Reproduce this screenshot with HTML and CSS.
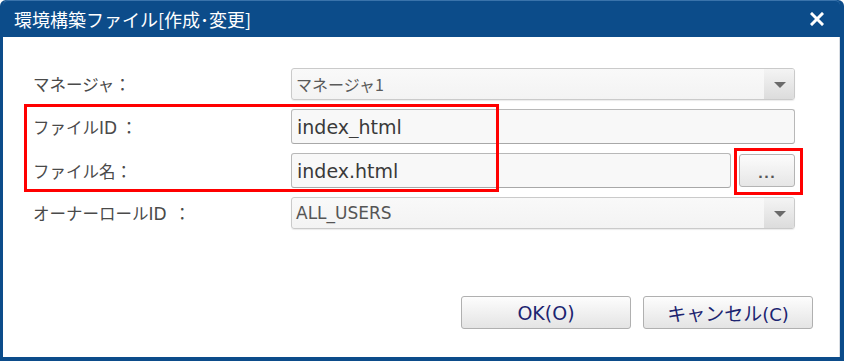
FILE: index.html
```html
<!DOCTYPE html>
<html lang="ja">
<head>
    <meta charset="UTF-8">
    <title>環境構築ファイル[作成･変更]</title>
    <link rel="stylesheet" href="styles.css">
</head>
<body>
    <div class="dialog">
        <!-- タイトルバー -->
        <div class="titlebar">
            <span class="title">環境構築ファイル[作成･変更]</span>
            <button class="close" aria-label="閉じる">
                <svg width="14" height="14" viewBox="0 0 14 14">
                    <path d="M2 2 L12 12 M12 2 L2 12" stroke="#fff" stroke-width="3" stroke-linecap="square"/>
                </svg>
            </button>
        </div>

        <div class="body">
            <div class="form">
                <div class="row">
                    <label>マネージャ：</label>
                    <div class="select">
                        <span class="value">マネージャ1</span>
                        <span class="arrow"></span>
                    </div>
                </div>
                <div class="row">
                    <label>ファイル<span class="latin">ID</span> ：</label>
                    <input type="text" class="field" value="index_html">
                </div>
                <div class="row">
                    <label>ファイル名：</label>
                    <div class="with-button">
                        <input type="text" class="field" value="index.html">
                        <button class="browse">...</button>
                    </div>
                </div>
                <div class="row">
                    <label>オーナーロール<span class="latin">ID</span> &nbsp;：</label>
                    <div class="select">
                        <span class="value value-latin">ALL_USERS</span>
                        <span class="arrow"></span>
                    </div>
                </div>
            </div>

            <div class="footer">
                <button class="btn">OK(O)</button>
                <button class="btn">キャンセル<span class="btn-key">(C)</span></button>
            </div>
        </div>

        <!-- 赤枠の注記 -->
        <div class="mark mark-fields"></div>
        <div class="mark mark-browse"></div>
    </div>
</body>
</html>
```

FILE: styles.css
```css
:root {
    --blue: #0c4c8a;
    --blue-light: #3a73ab;
    --label: #4a4a4a;
    --navy: #1c2470;
}

body {
    margin: 0;
    font-family: "DejaVu Sans", "Noto Sans CJK JP", sans-serif;
    background: #fff;
}

.dialog {
    position: relative;
    width: 844px;
    height: 361px;
    box-sizing: border-box;
    background: var(--blue);
    border-radius: 6px 6px 0 0;
    padding: 0 4px 4px 3px;
    display: flex;
    flex-direction: column;
}

/* --- タイトルバー --- */
.titlebar {
    height: 37px;
    display: flex;
    align-items: center;
    justify-content: space-between;
    padding: 0 16px 0 11px;
    border-top: 1px solid var(--blue-light);
    box-sizing: border-box;
    border-radius: 5px 5px 0 0;
}

.title {
    color: #fff;
    font-family: "Noto Sans CJK JP", sans-serif;
    font-size: 18px;
}

.close {
    background: none;
    border: none;
    padding: 0;
    display: flex;
    cursor: pointer;
}

/* --- 本体 --- */
.body {
    flex: 1;
    background: #fff;
    border-right: 1px solid #d8dde3;
    display: flex;
    flex-direction: column;
}

.form {
    padding: 31px 0 0 30px;
    display: flex;
    flex-direction: column;
    gap: 9px;
}

.row {
    display: grid;
    grid-template-columns: 258px 504px;
    align-items: center;
}

.row label {
    font-family: "Noto Sans CJK JP", sans-serif;
    font-size: 16.5px;
    color: var(--label);
}

.row label .latin {
    font-family: "DejaVu Sans", sans-serif;
    font-size: 17px;
}

.select {
    height: 32px;
    box-sizing: border-box;
    border: 1px solid #cacaca;
    border-radius: 3px;
    background: linear-gradient(#f9f9f9, #f3f3f3);
    box-shadow: 0 1px 1px rgba(0, 0, 0, 0.08);
    display: flex;
    align-items: center;
}

.select .value {
    flex: 1;
    padding-left: 4px;
    font-family: "Noto Sans CJK JP", sans-serif;
    font-size: 16px;
    color: #5a5a5a;
}

.select .value-latin {
    font-family: "DejaVu Sans", sans-serif;
    font-size: 17px;
    color: #555;
}

.select .arrow {
    width: 30px;
    align-self: stretch;
    background: linear-gradient(#f4f4f4, #dcdcdc);
    border-radius: 0 2px 2px 0;
    position: relative;
}

.select .arrow::after {
    content: "";
    position: absolute;
    left: 10px;
    top: 13px;
    border-left: 6px solid transparent;
    border-right: 6px solid transparent;
    border-top: 6px solid #6a6a6a;
}

.field {
    height: 35px;
    width: 100%;
    box-sizing: border-box;
    border: 1px solid #b8b8b8;
    border-bottom-color: #a8a8a8;
    border-radius: 3px;
    background: #f8f8f8;
    padding: 0 5px;
    font-family: "DejaVu Sans", sans-serif;
    font-size: 19px;
    color: #3a3a3a;
}

.with-button {
    display: flex;
    gap: 8px;
    align-items: center;
}

.with-button .field {
    flex: 1;
}

.browse {
    width: 56px;
    height: 33px;
    flex: none;
    border: 1px solid #b4b4b4;
    border-radius: 3px;
    background: linear-gradient(#fcfcfc, #e6e6e6);
    font-family: "DejaVu Sans", sans-serif;
    font-size: 13px;
    font-weight: bold;
    color: #555;
    padding: 6px 0 0;
    letter-spacing: 1px;
}

/* --- ボタン --- */
.footer {
    margin-top: auto;
    display: flex;
    justify-content: flex-end;
    gap: 12px;
    padding: 0 26px 28px 0;
}

.btn {
    width: 170px;
    height: 33px;
    border: 1px solid #b0b0b0;
    border-radius: 3px;
    background: linear-gradient(#fdfdfd, #e4e4e4);
    font-family: "DejaVu Sans", "Noto Sans CJK JP", sans-serif;
    font-size: 19px;
    color: var(--navy);
    cursor: pointer;
}

.btn .btn-key {
    font-size: 18px;
}

/* --- 注記の赤枠 --- */
.mark {
    position: absolute;
    border: 3px solid #f00;
    box-sizing: border-box;
    pointer-events: none;
}

.mark-fields {
    left: 24px;
    top: 104px;
    width: 475px;
    height: 88px;
}

.mark-browse {
    left: 734px;
    top: 148px;
    width: 69px;
    height: 47px;
}
```
